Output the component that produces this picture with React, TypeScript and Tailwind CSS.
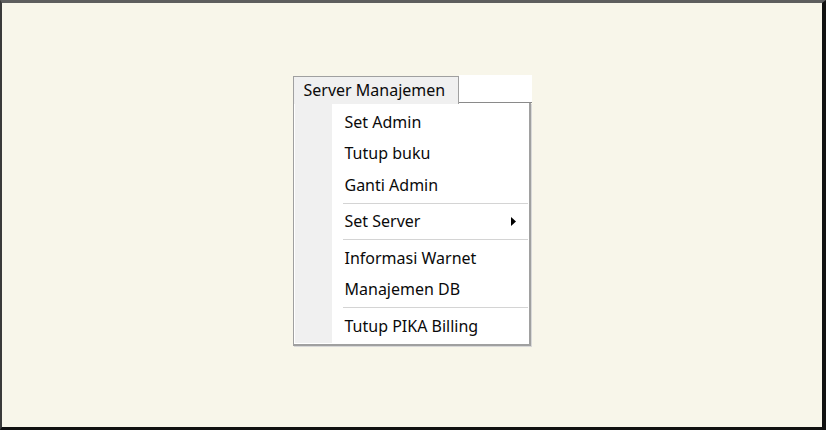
import React from "react";

type Entry = { label: string; sub?: boolean } | "sep";

const entries: Entry[] = [
  { label: "Set Admin" },
  { label: "Tutup buku" },
  { label: "Ganti Admin" },
  "sep",
  { label: "Set Server", sub: true },
  "sep",
  { label: "Informasi Warnet" },
  { label: "Manajemen DB" },
  "sep",
  { label: "Tutup PIKA Billing" },
];

export default function App() {
  return (
    <div
      className="w-[826px] h-[430px] bg-[#f8f6ea] border-l-[2px] border-l-[#3a3a3a] border-t-[3px] border-t-[#5e5e5e] border-r-[4px] border-r-[#111] border-b-[3px] border-b-[#111] flex justify-center overflow-hidden"
      style={{ fontFamily: '"Noto Sans", "Open Sans", sans-serif' }}
    >
      <div className="w-[239px] mt-[72px] h-[271px]">
        <div className="flex h-[28px]">
          <div className="w-[166px] h-[28px] mt-px bg-[#f0f0f0] border-l border-t border-r border-[#a0a0a0] text-[16px] leading-none text-[#0a0a0a] pl-[10px] pt-[5px] whitespace-nowrap">
            Server Manajemen
          </div>
          <div className="flex-1 h-[28px] bg-white border-b border-[#8a8a8a]" />
        </div>
        <div className="w-[238px] h-[243px] border-l border-b-2 border-r-2 border-[#a0a0a0] bg-white pl-px pr-px pb-px shadow-[1px_1px_0_#d8d8d8]">
          <div className="h-full bg-[linear-gradient(to_right,#f0f0f0_37px,#ffffff_37px)] pt-[3px]">
            {entries.map((e, i) =>
              e === "sep" ? (
                <div key={i} className="h-[5px] flex items-center pl-[48px]">
                  <div className="h-px w-full bg-[#d4d4d4]" />
                </div>
              ) : (
                <div
                  key={i}
                  className="h-[31.5px] flex items-center pl-[50px] pr-[12px] text-[16px] text-[#0a0a0a]"
                >
                  <span className="flex-1 whitespace-nowrap">{e.label}</span>
                  {e.sub && (
                    <svg width="5" height="9" viewBox="0 0 5 9">
                      <path d="M0 0 L5 4.5 L0 9 Z" fill="#000" />
                    </svg>
                  )}
                </div>
              )
            )}
          </div>
        </div>
      </div>
    </div>
  );
}
